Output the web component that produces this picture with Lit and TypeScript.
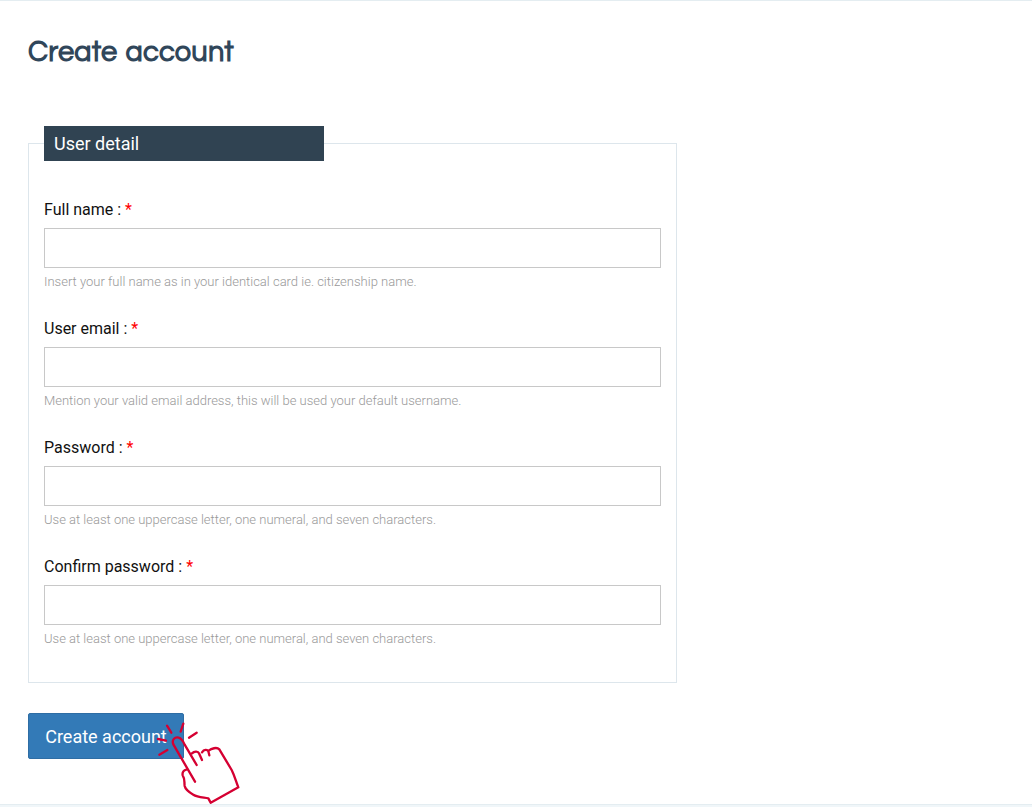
import { LitElement, html, css } from 'lit';
import { customElement } from 'lit/decorators.js';

interface Field {
  label: string;
  hint: string;
  type: string;
}

const FIELDS: Field[] = [
  { label: 'Full name', hint: 'Insert your full name as in your identical card ie. citizenship name.', type: 'text' },
  { label: 'User email', hint: 'Mention your valid email address, this will be used your default username.', type: 'email' },
  { label: 'Password', hint: 'Use at least one uppercase letter, one numeral, and seven characters.', type: 'password' },
  { label: 'Confirm password', hint: 'Use at least one uppercase letter, one numeral, and seven characters.', type: 'password' },
];

@customElement('app-root')
export class AppRoot extends LitElement {
  static styles = css`
    :host {
      display: block;
      height: 807px;
      box-sizing: border-box;
      overflow: hidden;
      background: #f0f6f9;
      font-family: Roboto, sans-serif;
    }

    .page {
      height: 805px;
      box-sizing: border-box;
      border-top: 1px solid #e4edf1;
      border-bottom: 1px solid #e4edf1;
      background: #fff;
      padding: 0 28px;
    }

    h1 {
      margin: 0;
      padding-top: 34px;
      height: 91px;
      box-sizing: content-box;
      font-family: 'Questrial', 'Inter', sans-serif;
      font-size: 29px;
      line-height: 34px;
      font-weight: 700;
      letter-spacing: 0.15px;
      word-spacing: 2px;
      color: #30465a;
    }

    fieldset {
      width: 649px;
      height: 557px;
      box-sizing: border-box;
      margin: 0;
      padding: 0 15px;
      border: 1px solid #dde6ec;
      min-inline-size: 0;
    }

    legend {
      width: 280px;
      height: 35px;
      box-sizing: border-box;
      padding: 0 10px;
      background: #304352;
      color: #fff;
      font-size: 18px;
      line-height: 35px;
    }

    .fields {
      display: flex;
      flex-direction: column;
      gap: 21px;
      padding-top: 39px;
    }

    label {
      display: block;
      height: 20px;
      margin-bottom: 8px;
      font-size: 16px;
      line-height: 20px;
      color: #111;
    }

    .req {
      color: #f00;
    }

    input {
      display: block;
      width: 100%;
      height: 40px;
      box-sizing: border-box;
      border: 1px solid #c8c8c8;
      border-radius: 0;
      background: #fff;
      padding: 0 10px;
      outline: none;
    }

    .hint {
      height: 30px;
      padding-top: 6px;
      box-sizing: border-box;
      font-size: 13px;
      font-weight: 300;
      line-height: 15px;
      color: #999;
    }

    .actions {
      position: relative;
      margin-top: 30px;
      width: 156px;
    }

    button {
      display: block;
      width: 156px;
      height: 46px;
      padding: 0;
      border: 1px solid #2e6da4;
      border-radius: 2px;
      background: #337ab7;
      color: #fff;
      font-family: inherit;
      font-size: 18px;
      text-align: center;
    }

    .hand {
      position: absolute;
      left: 112px;
      top: -3px;
      width: 110px;
      height: 97px;
      fill: none;
      stroke: #d50032;
      stroke-width: 7;
      stroke-linecap: round;
      stroke-linejoin: round;
      pointer-events: none;
    }
  `;

  render() {
    return html`
      <div class="page">
        <h1>Create account</h1>
        <fieldset>
          <legend>User detail</legend>
          <div class="fields">
            ${FIELDS.map(
              (f) => html`
                <div>
                  <label>${f.label} : <span class="req">*</span></label>
                  <input type=${f.type} />
                  <div class="hint">${f.hint}</div>
                </div>
              `
            )}
          </div>
        </fieldset>
        <div class="actions">
          <button>Create account</button>
          <svg class="hand" viewBox="0 0 330 291">
            <path d="M54 87 78 92M81 47 94 68M130 41 122 65M170 68 147 83M58 134 82 120" />
            <path d="M165 215 100 103C94 88 106 80 116 83C124 85 130 95 134 104L170 165" />
            <path d="M156 130C162 124 174 122 177 130L186 150M186 127C192 118 202 118 205 124L208 136" />
            <path d="M206 122C214 116 230 110 238 118L275 180C284 198 288 215 295 232L212 278 205 265C190 262 172 262 160 254 146 246 136 238 134 228 132 216 136 208 128 196 126 186 132 180 139 179" />
          </svg>
        </div>
      </div>
    `;
  }
}
